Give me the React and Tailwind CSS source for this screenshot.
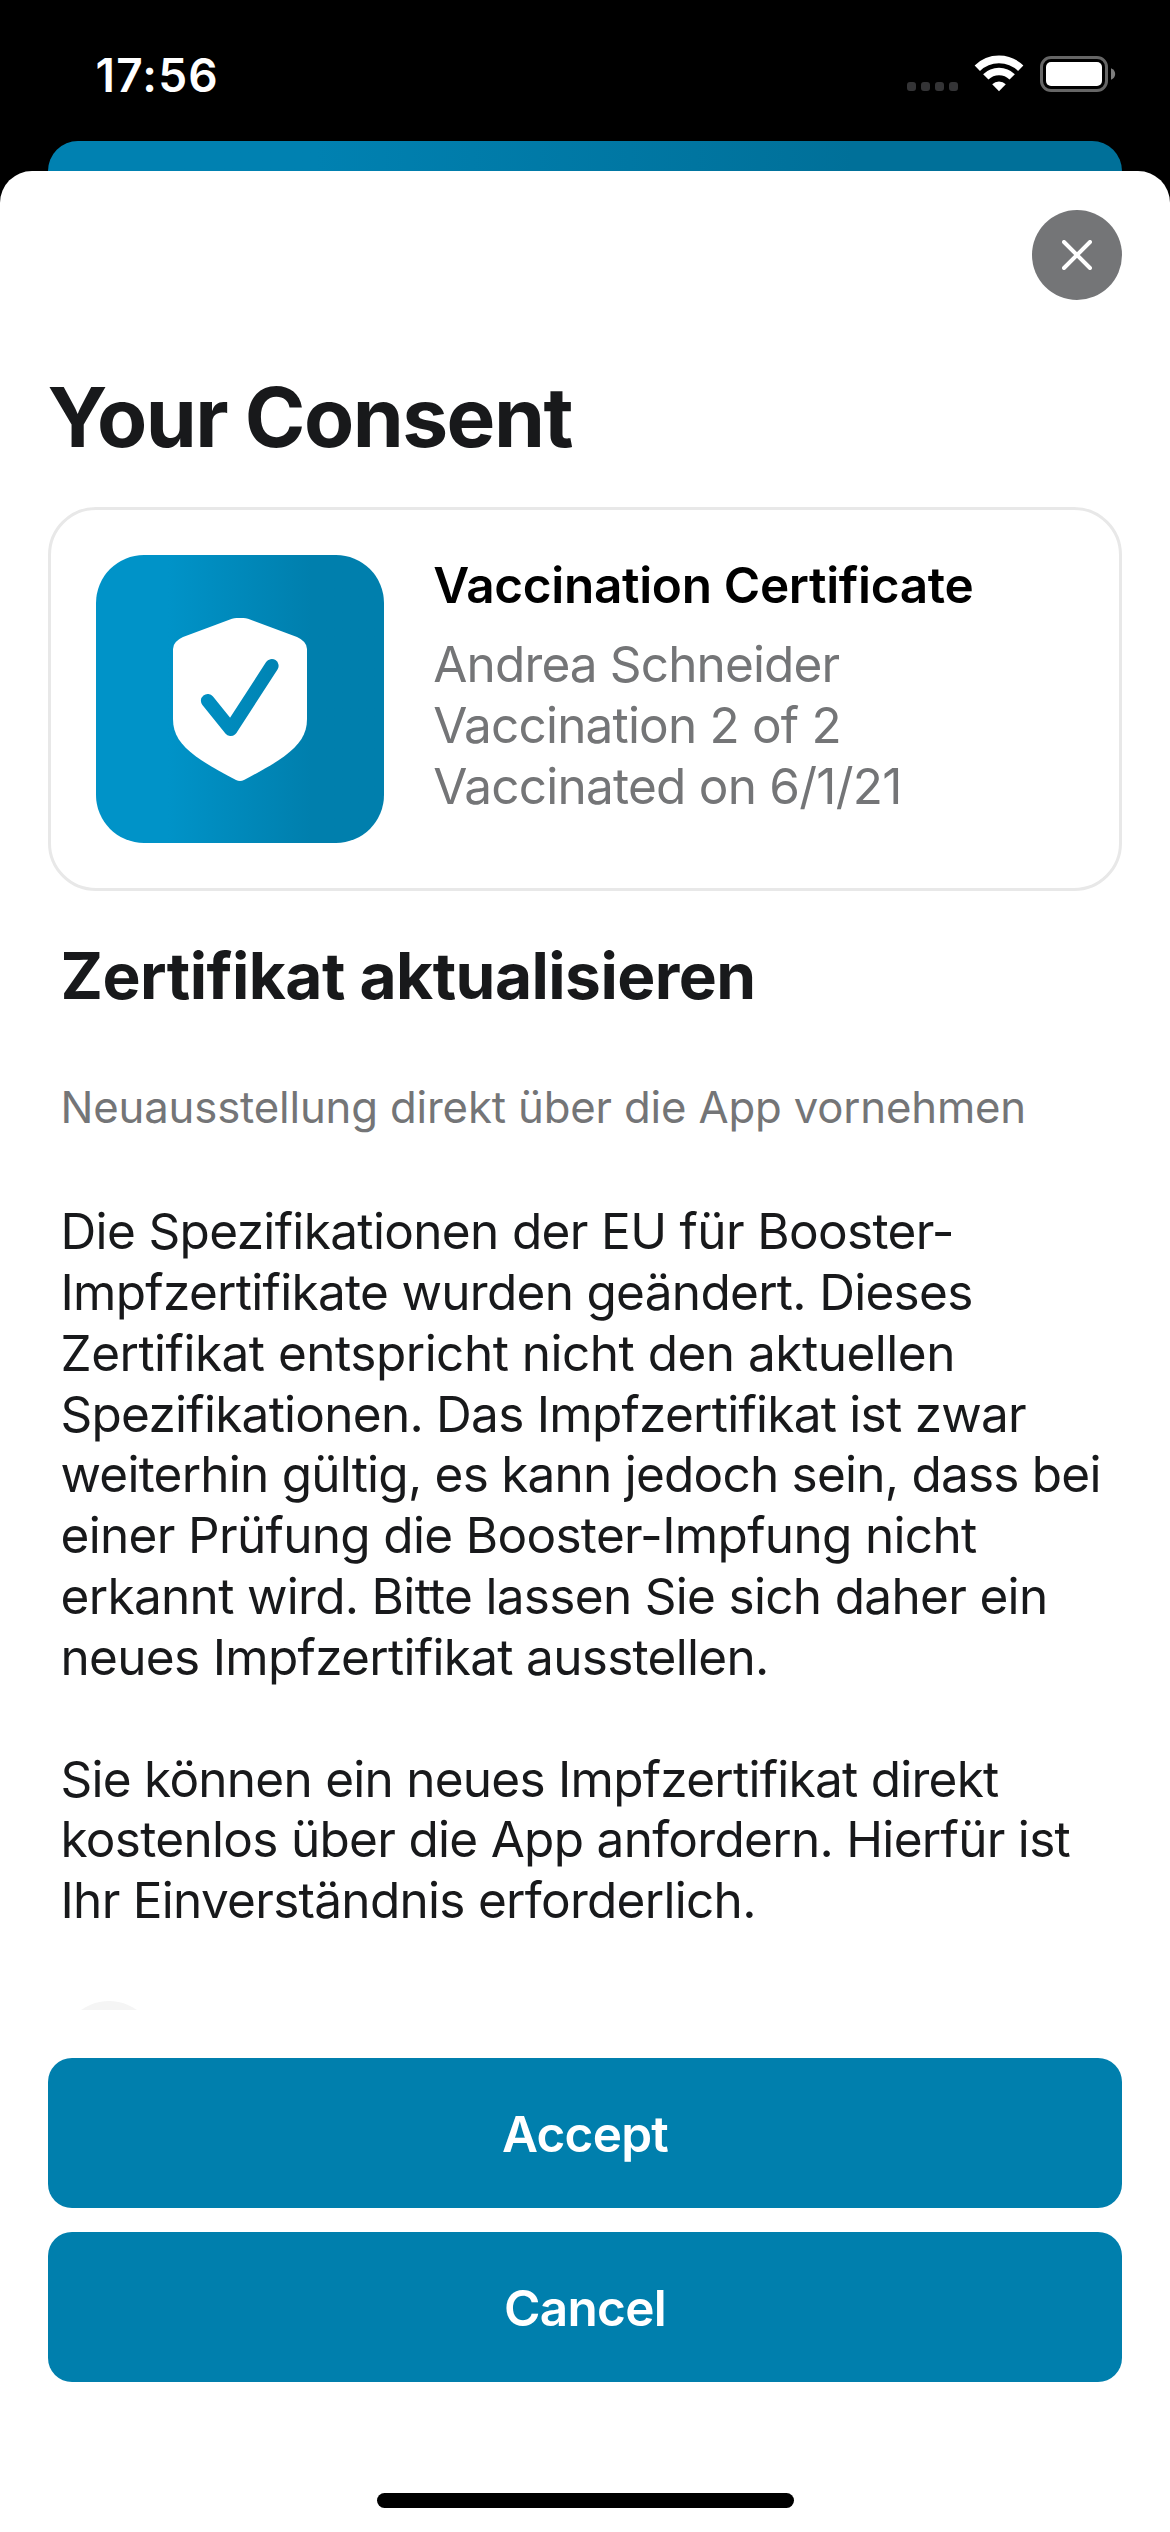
import React from "react";

const firstParagraph = [
  ["Die Spezifikationen der EU für Booster-", "tracking-[-0.65px]"],
  ["Impfzertifikate wurden geändert. Dieses", "tracking-[-0.7px]"],
  ["Zertifikat entspricht nicht den aktuellen", "tracking-[-0.5px]"],
  ["Spezifikationen. Das Impfzertifikat ist zwar", "tracking-[-0.74px]"],
  ["weiterhin gültig, es kann jedoch sein, dass bei", "tracking-[-0.77px]"],
  ["einer Prüfung die Booster-Impfung nicht", "tracking-[-0.67px]"],
  ["erkannt wird. Bitte lassen Sie sich daher ein", "tracking-[-0.68px]"],
  ["neues Impfzertifikat ausstellen.", "tracking-[-0.69px]"],
];

const secondParagraph = [
  ["Sie können ein neues Impfzertifikat direkt", "tracking-[-0.74px]"],
  ["kostenlos über die App anfordern. Hierfür ist", "tracking-[-0.70px]"],
  ["Ihr Einverständnis erforderlich.", "tracking-[-0.71px]"],
];

function StatusBar() {
  return (
    <div className="flex h-[141px] shrink-0 justify-between pl-[95.5px] pr-[54px] text-white">
      <span className="mt-[48px] text-[46px] leading-[54px] font-semibold tracking-[1.2px]">17:56</span>
      <svg className="mt-[48px] h-[52px] w-[216px]" viewBox="900 48 216 52" aria-hidden="true">
        <g fill="#343436">
          <rect x="907" y="82" width="9" height="9" rx="3" />
          <rect x="921" y="82" width="9" height="9" rx="3" />
          <rect x="935" y="82" width="9" height="9" rx="3" />
          <rect x="949" y="82" width="9" height="9" rx="3" />
        </g>
        <g fill="none" stroke="#fff" strokeWidth="7.6">
          <path d="M977.3 68.2A31 31 0 0 1 1020.7 68.2" />
          <path d="M985.8 76.9A18.8 18.8 0 0 1 1012.2 76.9" />
        </g>
        <path d="M999 91.2L992.2 84.3A9.6 9.6 0 0 1 1005.8 84.3Z" fill="#fff" />
        <rect x="1041.5" y="57.5" width="65" height="33" rx="9.5" fill="none" stroke="#666" strokeWidth="3" />
        <rect x="1046" y="62" width="56" height="24" rx="5" fill="#fff" />
        <path d="M1111 68.2C1113.6 69.3 1115.2 71.5 1115.2 74C1115.2 76.5 1113.6 78.7 1111 79.8Z" fill="#7d7d7d" />
      </svg>
    </div>
  );
}

function ShieldIcon() {
  return (
    <svg className="h-[163px] w-[134px]" viewBox="0 0 134 163" aria-hidden="true">
      <defs>
        <linearGradient id="check" gradientUnits="userSpaceOnUse" x1="-5" y1="0" x2="139" y2="0">
          <stop stopColor="#0093c8" />
          <stop offset="1" stopColor="#007fad" />
        </linearGradient>
      </defs>
      <path
        fill="#fff"
        d="M59 0.700Q67 -1 75 0.700L124 19Q134 23.500 134 31V101C134 116 127 126.500 111 138.500C100 146.500 86 154 71 162Q67 164 63 162C48 154 34 146.500 23 138.500C7 126.500 0 116 0 101V31Q0 23.500 10 19Z"
      />
      <path d="M34.700 82.700L57.700 111.300L98.800 47.800" fill="none" stroke="url(#check)" strokeWidth="13.600" strokeLinecap="round" strokeLinejoin="round" />
    </svg>
  );
}

function CertificateCard() {
  return (
    <section className="mx-[48px] mt-[39px] flex h-[384px] rounded-[48px] border-[3px] border-[#e8e8e8] p-[45px]">
      <div className="flex size-[288px] shrink-0 items-center justify-center rounded-[48px] bg-linear-to-r from-[#0093c8] from-25% to-[#007fad] to-75%">
        <ShieldIcon />
      </div>
      <div className="flex flex-col pl-[49.300px] whitespace-nowrap">
        <h2 className="text-[49.500px] leading-[60px] font-semibold tracking-[-0.320px] text-black">Vaccination Certificate</h2>
        <p className="mt-[19px] text-[49.500px] leading-[61px] text-[#747577]">
          <span className="block tracking-[-0.860px]">Andrea Schneider</span>
          <span className="block tracking-[-0.820px]">Vaccination 2 of 2</span>
          <span className="block tracking-[-0.760px]">Vaccinated on 6/1/21</span>
        </p>
      </div>
    </section>
  );
}

function Paragraph({ lines }) {
  return (
    <p>
      {lines.map(([text, tracking]) => (
        <span key={text} className={`block ${tracking}`}>{text}</span>
      ))}
    </p>
  );
}

function ActionButton({ children }) {
  return (
    <button className="flex h-[150px] items-center justify-center rounded-[24px] bg-[#007fad] pt-[2px] text-[49.500px] leading-[60px] font-semibold tracking-[-0.740px] text-white">
      {children}
    </button>
  );
}

export default function App() {
  return (
    <div className="flex h-[2532px] w-[1170px] flex-col overflow-hidden bg-black font-['Inter',sans-serif] antialiased">
      <StatusBar />
      <div className="mx-[48px] h-[66px] shrink-0 rounded-t-[30px] bg-linear-to-r from-[#0081b1] from-25% to-[#007099] to-75%" />
      <main className="-mt-[36px] flex h-[2361px] shrink-0 flex-col rounded-t-[32px] bg-white text-[#18191b]">
        <div className="flex shrink-0 justify-end pt-[39px] pr-[48px]">
          <button aria-label="Close" className="flex size-[90px] items-center justify-center rounded-full bg-[#747577]">
            <svg className="size-[30px]" viewBox="0 0 30 30" aria-hidden="true">
              <path d="M2 2L28 28M28 2L2 28" stroke="#fff" strokeWidth="4" strokeLinecap="round" />
            </svg>
          </button>
        </div>
        <div className="h-[1710px] shrink-0 overflow-hidden">
          <h1 className="mt-[68px] ml-[47.500px] text-[82px] leading-[100px] font-bold tracking-[-1.550px] whitespace-nowrap">Your Consent</h1>
          <CertificateCard />
          <article className="pt-[45.500px] pl-[60.500px] whitespace-nowrap">
            <h2 className="text-[64px] leading-[78px] font-bold tracking-[-0.540px]">Zertifikat aktualisieren</h2>
            <p className="mt-[66px] text-[43.700px] leading-[54px] tracking-[-0.160px] text-[#747577]">
              Neuausstellung direkt über die App vornehmen
            </p>
            <div className="mt-[66.500px] flex flex-col gap-[60.840px] text-[49.500px] leading-[60.840px]">
              <Paragraph lines={firstParagraph} />
              <Paragraph lines={secondParagraph} />
            </div>
            <div className="mt-[70px] size-[96px] rounded-full bg-[#f5f5f5]" />
          </article>
        </div>
        <div className="mx-[48px] mt-[48px] flex shrink-0 flex-col gap-[24px]">
          <ActionButton>Accept</ActionButton>
          <ActionButton>Cancel</ActionButton>
        </div>
        <div className="mx-auto mt-[111px] h-[15px] w-[417px] shrink-0 rounded-full bg-black" />
      </main>
    </div>
  );
}
